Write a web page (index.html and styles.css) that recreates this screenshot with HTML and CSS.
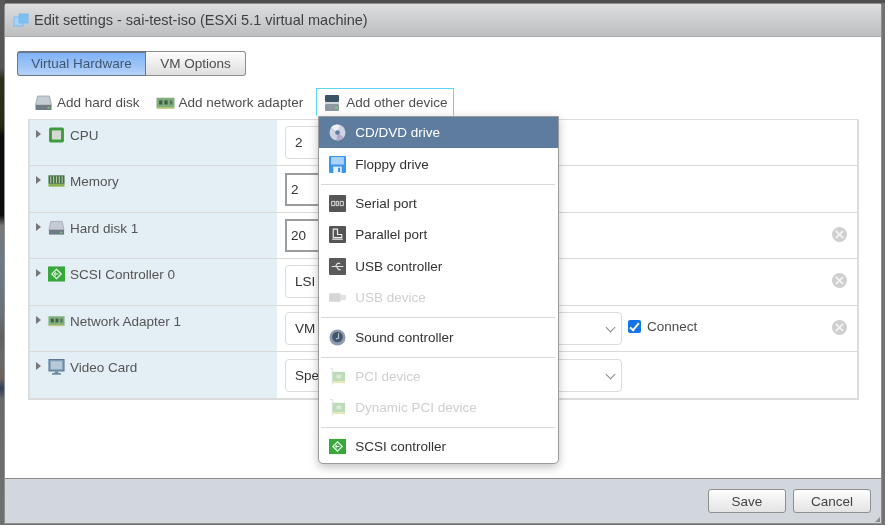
FILE: index.html
```html
<!DOCTYPE html>
<html lang="en">
<head>
    <meta charset="UTF-8">
    <meta name="viewport" content="width=device-width, initial-scale=1.0">
    <title>Edit settings</title>
    <link rel="stylesheet" href="styles.css">
</head>
<body>
    <svg class="defs" width="0" height="0">
        <defs>
            <symbol id="i-disk" viewBox="0 0 18 16">
                <path d="M3 1h12l2 9H1z" fill="#c5cbd2" stroke="#9aa3ab" stroke-width=".8"/>
                <rect x="1" y="10" width="16" height="5" fill="#6f7b85"/>
                <rect x="13" y="12" width="2" height="1.5" fill="#7fdc6a"/>
            </symbol>
            <symbol id="i-nic" viewBox="0 0 18 12">
                <rect x=".5" y="1" width="17" height="10" fill="#7fae7c"/>
                <rect x="3" y="3.5" width="3" height="4" fill="#3f5f45"/>
                <rect x="8" y="3.5" width="3" height="4" fill="#3f5f45"/>
                <rect x="13" y="3.5" width="2.5" height="4" fill="#55785a"/>
                <rect x="1" y="10" width="16" height="1.5" fill="#c4c77a"/>
            </symbol>
            <symbol id="i-device" viewBox="0 0 14 18">
                <rect x="0" y="1" width="14" height="7" rx="1" fill="#3c5266"/>
                <rect x="0" y="8" width="14" height="2" fill="#cfd6dc"/>
                <rect x="0" y="10" width="14" height="7" rx="1" fill="#8c99a3"/>
                <rect x="10" y="13" width="2.5" height="1.5" fill="#7fdc6a"/>
            </symbol>
            <symbol id="i-cpu" viewBox="0 0 14 14">
                <rect x=".5" y=".5" width="13" height="13" rx="1.5" fill="#3e9a3e"/>
                <rect x="3" y="3" width="8" height="8" fill="#d6d8d4"/>
            </symbol>
            <symbol id="i-mem" viewBox="0 0 18 14">
                <rect x=".5" y="1" width="17" height="9" fill="#3f6f42"/>
                <path d="M3 2v7M6 2v7M9 2v7M12 2v7M15 2v7" stroke="#b9c9a8" stroke-width="1.2"/>
                <rect x=".5" y="10" width="17" height="3" fill="#8bb04f"/>
            </symbol>
            <symbol id="i-scsi" viewBox="0 0 18 16">
                <rect width="18" height="16" fill="#39a83c"/>
                <path d="M9 3l5 5-5 5-5-5z" fill="none" stroke="#e4f4e0" stroke-width="1.3"/>
                <path d="M11 8H7M8.5 6L6.5 8l2 2" fill="none" stroke="#fff" stroke-width="1"/>
            </symbol>
            <symbol id="i-video" viewBox="0 0 18 18">
                <rect x=".5" y=".5" width="17" height="13" fill="#7f9dbb" stroke="#54708c"/>
                <rect x="2.5" y="2.5" width="13" height="9" fill="#b7c9d8"/>
                <rect x="7" y="14" width="4" height="2" fill="#6f8499"/>
                <rect x="4" y="16" width="10" height="1.5" fill="#54708c"/>
            </symbol>
            <symbol id="i-cd" viewBox="0 0 16 16">
                <circle cx="8" cy="8" r="7.5" fill="#cfd3e4"/>
                <path d="M8 8L2 3a7.5 7.5 0 0 1 8-2z" fill="#eef0f6"/>
                <path d="M8 8l6 5a7.5 7.5 0 0 1-7 2z" fill="#b6a9c9"/>
                <circle cx="8" cy="8" r="2.2" fill="#5e7c9e"/>
            </symbol>
            <symbol id="i-floppy" viewBox="0 0 16 16">
                <rect width="16" height="16" rx="1" fill="#3d96ee"/>
                <rect x="2" y="1" width="12" height="7" fill="#a9d3fa"/>
                <rect x="4" y="10" width="8" height="6" fill="#e6f1fb"/>
                <rect x="8.5" y="11" width="2" height="4" fill="#3d96ee"/>
            </symbol>
            <symbol id="i-serial" viewBox="0 0 16 16">
                <rect width="16" height="16" rx="1" fill="#555"/>
                <path d="M2.5 6h3v4h-3zM6.8 6h2v4h-2zM10.5 6h3v4h-3z" fill="none" stroke="#e6e6e6" stroke-width=".9"/>
            </symbol>
            <symbol id="i-parallel" viewBox="0 0 16 16">
                <rect width="16" height="16" rx="1" fill="#555"/>
                <path d="M4 3h4v5h4v3H4zM3 12.5h10" fill="none" stroke="#eee" stroke-width="1.1"/>
            </symbol>
            <symbol id="i-usb" viewBox="0 0 16 16">
                <rect width="16" height="16" rx="1" fill="#5a5a5a"/>
                <path d="M2.5 8h11M6 8l2-3h2.5M7 8l2 3h2" fill="none" stroke="#e2e2e2" stroke-width="1.1"/>
            </symbol>
            <symbol id="i-usbdev" viewBox="0 0 16 12">
                <rect y="2" width="11" height="8" rx="1" fill="#d6d6d6"/>
                <rect x="11" y="3.5" width="5" height="5" fill="#e2e2e2"/>
            </symbol>
            <symbol id="i-sound" viewBox="0 0 16 16">
                <circle cx="8" cy="8" r="7.5" fill="#8d9bad"/>
                <circle cx="8" cy="7.5" r="5" fill="#42566e"/>
                <path d="M9 4v4.5l-2.5.8" fill="none" stroke="#b9c6d4" stroke-width="1"/>
            </symbol>
            <symbol id="i-pci" viewBox="0 0 16 18">
                <path d="M.5 .5h2v17" fill="none" stroke="#cfd6dd" stroke-width=".8"/>
                <rect x="3" y="4" width="13" height="10" fill="#bcdcb8"/>
                <rect x="7" y="7" width="5" height="4" fill="#dce9d8"/>
                <rect x="3" y="14" width="13" height="2" fill="#e7e6b4"/>
            </symbol>
            <symbol id="i-vm" viewBox="0 0 16 16">
                <rect x="1" y="5" width="9" height="9" fill="#a8d4f8" stroke="#6fb4ee" stroke-width=".8"/>
                <rect x="6" y="2" width="9" height="9" fill="#7cc0f3" stroke="#6fb4ee" stroke-width=".8"/>
            </symbol>
        </defs>
    </svg>

    <div class="backdrop">
        <div class="dialog">
            <div class="title">
                <svg class="ico-title"><use href="#i-vm"/></svg>
                <span>Edit settings - sai-test-iso (ESXi 5.1 virtual machine)</span>
            </div>
            <div class="content">
                <div class="tabs">
                    <div class="tab active">Virtual Hardware</div>
                    <div class="tab">VM Options</div>
                </div>
                <div class="toolbar">
                    <div class="tool"><svg class="ico-18"><use href="#i-disk"/></svg>Add hard disk</div>
                    <div class="tool"><svg class="ico-18"><use href="#i-nic"/></svg>Add network adapter</div>
                    <div class="tool focused"><svg class="ico-dev"><use href="#i-device"/></svg>Add other device
                        <div class="menu">
                            <div class="item hover"><svg class="ico-16"><use href="#i-cd"/></svg>CD/DVD drive</div>
                            <div class="item"><svg class="ico-16"><use href="#i-floppy"/></svg>Floppy drive</div>
                            <div class="sep"></div>
                            <div class="item"><svg class="ico-16"><use href="#i-serial"/></svg>Serial port</div>
                            <div class="item"><svg class="ico-16"><use href="#i-parallel"/></svg>Parallel port</div>
                            <div class="item"><svg class="ico-16"><use href="#i-usb"/></svg>USB controller</div>
                            <div class="item off"><svg class="ico-16"><use href="#i-usbdev"/></svg>USB device</div>
                            <div class="sep"></div>
                            <div class="item"><svg class="ico-16"><use href="#i-sound"/></svg>Sound controller</div>
                            <div class="sep"></div>
                            <div class="item off"><svg class="ico-16"><use href="#i-pci"/></svg>PCI device</div>
                            <div class="item off"><svg class="ico-16"><use href="#i-pci"/></svg>Dynamic PCI device</div>
                            <div class="sep last"></div>
                            <div class="item"><svg class="ico-16"><use href="#i-scsi"/></svg>SCSI controller</div>
                        </div>
                    </div>
                </div>

                <div class="hw">
                    <div class="row">
                        <div class="name"><i class="arrow"></i><svg class="ico-row"><use href="#i-cpu"/></svg>CPU</div>
                        <div class="val"><div class="field soft">2</div></div>
                    </div>
                    <div class="row">
                        <div class="name"><i class="arrow"></i><svg class="ico-row"><use href="#i-mem"/></svg>Memory</div>
                        <div class="val"><div class="field hard">2</div></div>
                    </div>
                    <div class="row">
                        <div class="name"><i class="arrow"></i><svg class="ico-row"><use href="#i-disk"/></svg>Hard disk 1</div>
                        <div class="val"><div class="field hard">20</div><span class="x"></span></div>
                    </div>
                    <div class="row">
                        <div class="name"><i class="arrow"></i><svg class="ico-row"><use href="#i-scsi"/></svg>SCSI Controller 0</div>
                        <div class="val"><div class="field soft">LSI</div><span class="x"></span></div>
                    </div>
                    <div class="row">
                        <div class="name"><i class="arrow"></i><svg class="ico-row"><use href="#i-nic"/></svg>Network Adapter 1</div>
                        <div class="val">
                            <div class="field soft wide">VM<i class="chev"></i></div>
                            <label class="conn"><i class="check"></i>Connect</label>
                            <span class="x"></span>
                        </div>
                    </div>
                    <div class="row">
                        <div class="name"><i class="arrow"></i><svg class="ico-row"><use href="#i-video"/></svg>Video Card</div>
                        <div class="val"><div class="field soft wide">Spe<i class="chev"></i></div></div>
                    </div>
                </div>
            </div>
            <div class="footer">
                <button class="btn">Save</button>
                <button class="btn">Cancel</button>
                <i class="grip"></i>
            </div>
        </div>
    </div>
</body>
</html>
```

FILE: styles.css
```css
html, body {
    margin: 0;
    height: 100%;
    background: #fff;
    overflow: hidden;
}
body {
    font-family: "Liberation Sans", Arial, sans-serif;
    font-size: 13.5px;
    color: #444;
}
.defs {
    display: block;
    height: 0;
}
.backdrop {
    width: 885px;
    height: 525px;
    box-sizing: border-box;
    padding: 3px 3px 1px 4px;
    background:
        linear-gradient(#5a5a5a, #555 13%, #2b3018 15%, #262a14 24%, #0c0c0c 26%, #0c0c0c 41%, #77797b 43%, #6b7a86 50%, #6a7278 60%, #5f5f5f 64%, #6a6a6a 68%, #6d6259 72%, #30405a 74%, #6a6a6a 76%, #707070 100%) left top / 5px 100% no-repeat,
        linear-gradient(#4f4f4f, #4f4f4f) left top / 100% 3px no-repeat,
        #727272;
    filter: blur(.5px);
}
.dialog {
    height: 100%;
    box-sizing: border-box;
    border: 1px solid #8f8f8f;
    border-radius: 4px 4px 0 0;
    display: flex;
    flex-direction: column;
    background: #fff;
}
.title {
    height: 33px;
    flex: none;
    display: flex;
    align-items: center;
    gap: 5px;
    padding-left: 8px;
    box-sizing: border-box;
    background: linear-gradient(#dcdedf, #bcbebf);
    font-size: 14.5px;
    color: #3f3f3f;
    border-bottom: 1px solid #a9abad;
}
.ico-title {
    width: 16px;
    height: 16px;
}
.content {
    flex: 1;
    padding: 14px 23px 0 12px;
    position: relative;
}
.tabs {
    display: flex;
}
.tab {
    height: 25px;
    box-sizing: border-box;
    line-height: 23px;
    width: 100px;
    text-align: center;
    border: 1px solid #8d8d8d;
    border-left: 0;
    border-radius: 0 3px 3px 0;
    background: linear-gradient(#fdfdfd, #dedede);
    color: #4d4d4d;
}
.tab.active {
    width: 129px;
    border-width: 2px 1px 1px 1px;
    border-style: solid;
    border-color: #6d7783;
    border-radius: 3px 0 0 3px;
    background: linear-gradient(#7eb2f6, #b5d2f8);
    color: #41566e;
    line-height: 21px;
}
.toolbar {
    display: flex;
    align-items: center;
    height: 28px;
    margin: 12px 0 3px 0;
    padding-left: 17px;
    position: relative;
}
.tool {
    display: flex;
    align-items: center;
    gap: 4px;
    margin-right: 16px;
    padding-top: 1px;
    white-space: nowrap;
    color: #4e4e4e;
}
.tool.focused {
    box-sizing: border-box;
    height: 28px;
    width: 138px;
    margin-left: -3px;
    padding-left: 8px;
    gap: 7px;
    border: 1px solid #5fd5f7;
    border-bottom-color: transparent;
    position: relative;
}
.ico-18 {
    width: 19px;
    height: 16px;
}
.ico-dev {
    width: 14px;
    height: 18px;
}
.ico-16 {
    width: 17px;
    height: 17px;
    flex: none;
}
.ico-row {
    width: 17px;
    height: 16px;
    margin: -1px 5px 0 0;
    flex: none;
}
.hw {
    margin-left: 11px;
    width: 831px;
    border: 2px solid #dcdcdc;
    border-width: 1px 2px 2px 2px;
    box-sizing: border-box;
}
.row {
    display: flex;
    height: 46.4px;
    box-sizing: border-box;
    border-bottom: 1px solid #d9d9d9;
}
.row:last-child {
    border-bottom: 0;
}
.name {
    width: 247px;
    flex: none;
    box-sizing: border-box;
    padding: 8px 0 0 6px;
    background: #e4eef5;
    display: flex;
    align-items: flex-start;
    color: #555;
    line-height: 16px;
}
.arrow {
    width: 0;
    height: 0;
    margin: 2px 7px 0 0;
    border: 4px solid transparent;
    border-left: 5px solid #777;
    border-right: 0;
}
.val {
    flex: 1;
    display: flex;
    align-items: center;
    padding-left: 8px;
    position: relative;
}
.field {
    width: 200px;
    height: 33px;
    box-sizing: border-box;
    line-height: 31px;
    padding-left: 9px;
    color: #333;
    position: relative;
}
.field.soft {
    border: 1px solid #dcdcdc;
    border-radius: 4px;
}
.field.hard {
    border: 2px solid #9c9c9c;
    line-height: 29px;
    padding-left: 4px;
}
.field.wide {
    width: 337px;
}
.chev {
    position: absolute;
    right: 7px;
    top: 11px;
    width: 6px;
    height: 6px;
    border: solid #888;
    border-width: 0 1px 1px 0;
    transform: rotate(45deg);
}
.conn {
    display: flex;
    align-items: center;
    gap: 6px;
    margin-left: 6px;
    margin-top: -3px;
    color: #4a4a4a;
}
.check {
    width: 13px;
    height: 13px;
    border-radius: 2px;
    background: #1274e8;
    position: relative;
}
.check::after {
    content: "";
    position: absolute;
    left: 4px;
    top: 1px;
    width: 3px;
    height: 8px;
    border: solid #fff;
    border-width: 0 2px 2px 0;
    transform: rotate(40deg);
}
.x {
    position: absolute;
    right: 10px;
    top: 14px;
    width: 15px;
    height: 15px;
    border-radius: 50%;
    background: #cfcfcf;
}
.x::before {
    content: "\00d7";
    position: absolute;
    inset: 0;
    text-align: center;
    line-height: 15px;
    font-size: 17px;
    font-weight: bold;
    color: #f2f2f2;
}
.menu {
    position: absolute;
    left: 1px;
    top: 27px;
    width: 241px;
    box-sizing: border-box;
    background: #fff;
    border: 1px solid #9a9a9a;
    border-radius: 0 0 5px 5px;
    box-shadow: 0 3px 10px rgba(0, 0, 0, .25);
    z-index: 5;
    padding-bottom: 1px;
}
.item {
    height: 31.4px;
    display: flex;
    align-items: center;
    gap: 9px;
    padding-left: 10px;
    color: #333;
}
.item.hover {
    background: #5e7c9e;
    color: #fff;
}
.item.off {
    color: #cfcfcf;
}
.sep {
    height: 1px;
    margin: 4px 3px 3px 2px;
    background: #d8d8d8;
}
.sep.last {
    margin-top: 3px;
}
.footer {
    height: 45px;
    flex: none;
    box-sizing: border-box;
    border-top: 1px solid #8a8a8a;
    background: #d2d7de;
    display: flex;
    justify-content: flex-end;
    align-items: flex-start;
    gap: 7px;
    padding: 10px 10px 0 0;
    position: relative;
}
.btn {
    width: 78px;
    height: 24px;
    padding: 0;
    font: 13.5px "Liberation Sans", Arial, sans-serif;
    color: #444;
    border: 1px solid #8f8f8f;
    border-radius: 3px;
    background: linear-gradient(#fdfdfd, #e4e4e4);
}
.grip {
    position: absolute;
    right: 1px;
    bottom: 1px;
    width: 0;
    height: 0;
    border-left: 5px solid transparent;
    border-bottom: 5px solid #8a8a8a;
}
```
